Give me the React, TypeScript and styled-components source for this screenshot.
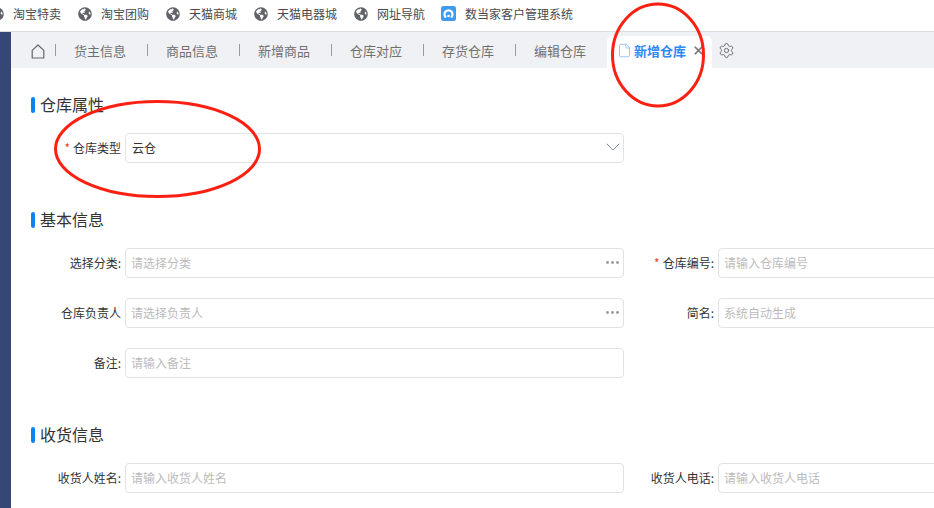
import styled, { createGlobalStyle } from "styled-components";
import { ChevronDown, File, Settings, X } from "lucide-react";
import { FaGlobeAmericas } from "react-icons/fa";

const GlobalStyle = createGlobalStyle`
  html, body {
    margin: 0;
    padding: 0;
    height: 100%;
    overflow: hidden;
    background: #fff;
  }
  body {
    font-family: "Noto Sans CJK SC", "Liberation Sans", sans-serif;
  }
`;

const Page = styled.div`
  position: relative;
  width: 934px;
  height: 508px;
  overflow: hidden;
  display: flex;
  flex-direction: column;
`;

const Bookmarks = styled.div`
  flex: none;
  height: 31px;
  display: flex;
  align-items: center;
  gap: 17px;
  border-bottom: 1px solid #dcdcdc;
  overflow: hidden;
`;

const Bookmark = styled.div`
  display: flex;
  align-items: center;
  gap: 9px;
  font-size: 12px;
  color: #4a4a4a;
  white-space: nowrap;
  padding-bottom: 4px;
  &:first-child {
    margin-left: -10px;
  }
`;

const Globe = styled(FaGlobeAmericas)`
  width: 14px;
  height: 14px;
  color: #5f6368;
`;

const Main = styled.div`
  flex: 1;
  display: flex;
  min-height: 0;
`;

const Sidebar = styled.div`
  flex: none;
  width: 11px;
  background: #344777;
`;

const Content = styled.div`
  flex: 1;
  min-width: 0;
`;

const TabBar = styled.div`
  height: 36px;
  display: flex;
  align-items: flex-end;
  background: #f0f1f5;
  padding-left: 19px;
`;

const HomeCell = styled.div`
  height: 36px;
  width: 25px;
  box-sizing: border-box;
  padding: 3px 0 0 1px;
  display: flex;
  align-items: center;
  color: #666;
`;

const Tab = styled.div`
  position: relative;
  width: 92px;
  height: 36px;
  box-sizing: border-box;
  padding-left: 19px;
  display: flex;
  align-items: center;
  font-size: 13px;
  color: #707070;
  white-space: nowrap;
  &::before {
    content: "";
    position: absolute;
    left: 0;
    top: 12px;
    width: 1px;
    height: 12px;
    background: #9a9a9a;
  }
`;

const ActiveTab = styled.div`
  width: 105px;
  height: 32px;
  box-sizing: border-box;
  background: #fff;
  border-radius: 5px 5px 0 0;
  padding-left: 10px;
  padding-bottom: 3px;
  display: flex;
  align-items: center;
  font-size: 13px;
  font-weight: 700;
  color: #2f88f5;
  white-space: nowrap;
`;

const TabFile = styled(File)`
  width: 15px;
  height: 15px;
  color: #8fb4f0;
  margin-right: 2px;
`;

const TabClose = styled(X)`
  width: 13px;
  height: 13px;
  color: #777;
  margin-left: 6px;
`;

const Gear = styled(Settings)`
  align-self: center;
  width: 17px;
  height: 17px;
  color: #666;
  margin-left: 6px;
`;

const Form = styled.div`
  padding: 29px 0 0 20px;
`;

const SectionTitle = styled.div<{ $top?: number }>`
  display: flex;
  align-items: flex-start;
  height: 16px;
  margin-top: ${(p) => p.$top ?? 0}px;
  font-size: 16px;
  line-height: 14px;
  color: #333;
  gap: 5px;
  &::before {
    content: "";
    width: 4px;
    height: 16px;
    border-radius: 2px;
    background: #0a84f5;
  }
`;

const Row = styled.div<{ $top: number }>`
  display: grid;
  grid-template-columns: 90px 499px 86px 300px;
  column-gap: 4px;
  align-items: center;
  margin-top: ${(p) => p.$top}px;
`;

const Label = styled.div`
  text-align: right;
  font-size: 12px;
  color: #333;
  white-space: nowrap;
  padding-bottom: 2px;
`;

const Star = styled.span`
  color: #e8412f;
  margin-right: 3px;
`;

const Control = styled.div`
  height: 30px;
  box-sizing: border-box;
  border: 1px solid #e2e2e2;
  border-radius: 4px;
  padding: 0 4px 2px 5px;
  display: flex;
  align-items: center;
  justify-content: space-between;
  font-size: 12px;
  color: #bbb;
  white-space: nowrap;
`;

const Value = styled.span`
  color: #333;
  margin-left: 1px;
`;

const Chevron = styled(ChevronDown)`
  width: 24px;
  height: 24px;
  color: #7a8aa0;
  margin-right: -6px;
`;

const Dots = styled.svg`
  width: 13px;
  height: 3px;
  fill: #999;
`;

const Logo = styled.svg`
  width: 15px;
  height: 15px;
  margin-left: -1px;
`;

const Marks = styled.svg`
  position: absolute;
  left: 0;
  top: 0;
  width: 934px;
  height: 508px;
  pointer-events: none;
`;

const HomeIcon = () => (
  <svg width="14" height="15" viewBox="0 0 14 15" fill="none" stroke="currentColor" strokeWidth="1.2">
    <path d="M1.2 14V6.4L7 1l5.800 5.400V14z" strokeLinejoin="round" />
  </svg>
);

const AppLogo = () => (
  <Logo viewBox="0 0 15 15">
    <rect width="15" height="15" rx="2.5" fill="#3f9bf0" />
    <path d="M5 11.4a4 4 0 1 1 5 0" fill="none" stroke="#fff" strokeWidth="2.200" />
    <circle cx="7.500" cy="10" r="1.300" fill="#fff" />
  </Logo>
);

const MoreDots = () => (
  <Dots viewBox="0 0 13 3">
    <circle cx="1.500" cy="1.500" r="1.400" />
    <circle cx="6.500" cy="1.500" r="1.400" />
    <circle cx="11.500" cy="1.500" r="1.400" />
  </Dots>
);

const bookmarks = ["淘宝特卖", "淘宝团购", "天猫商城", "天猫电器城", "网址导航"];
const tabs = ["货主信息", "商品信息", "新增商品", "仓库对应", "存货仓库", "编辑仓库"];

export default function App() {
  return (
    <Page>
      <GlobalStyle />
      <Bookmarks>
        {bookmarks.map((b) => (
          <Bookmark key={b}>
            <Globe />
            {b}
          </Bookmark>
        ))}
        <Bookmark>
          <AppLogo />
          数当家客户管理系统
        </Bookmark>
      </Bookmarks>
      <Main>
        <Sidebar />
        <Content>
          <TabBar>
            <HomeCell>
              <HomeIcon />
            </HomeCell>
            {tabs.map((t) => (
              <Tab key={t}>{t}</Tab>
            ))}
            <ActiveTab>
              <TabFile strokeWidth={1.3} />
              新增仓库
              <TabClose strokeWidth={3.2} />
            </ActiveTab>
            <Gear strokeWidth={1.3} />
          </TabBar>
          <Form>
            <SectionTitle>仓库属性</SectionTitle>
            <Row $top={20}>
              <Label>
                <Star>*</Star>仓库类型
              </Label>
              <Control>
                <Value>云仓</Value>
                <Chevron strokeWidth={1} />
              </Control>
            </Row>
            <SectionTitle $top={49}>基本信息</SectionTitle>
            <Row $top={20}>
              <Label>选择分类:</Label>
              <Control>
                请选择分类
                <MoreDots />
              </Control>
              <Label>
                <Star>*</Star>仓库编号:
              </Label>
              <Control>请输入仓库编号</Control>
            </Row>
            <Row $top={20}>
              <Label>仓库负责人</Label>
              <Control>
                请选择负责人
                <MoreDots />
              </Control>
              <Label>简名:</Label>
              <Control>系统自动生成</Control>
            </Row>
            <Row $top={20}>
              <Label>备注:</Label>
              <Control>请输入备注</Control>
            </Row>
            <SectionTitle $top={49}>收货信息</SectionTitle>
            <Row $top={20}>
              <Label>收货人姓名:</Label>
              <Control>请输入收货人姓名</Control>
              <Label>收货人电话:</Label>
              <Control>请输入收货人电话</Control>
            </Row>
          </Form>
        </Content>
      </Main>
      <Marks viewBox="0 0 934 508">
        <ellipse cx="157.5" cy="149" rx="102" ry="47.5" fill="none" stroke="#fb2012" strokeWidth="3" />
        <ellipse cx="658" cy="55" rx="45.5" ry="51" fill="none" stroke="#fb2012" strokeWidth="3" />
      </Marks>
    </Page>
  );
}
